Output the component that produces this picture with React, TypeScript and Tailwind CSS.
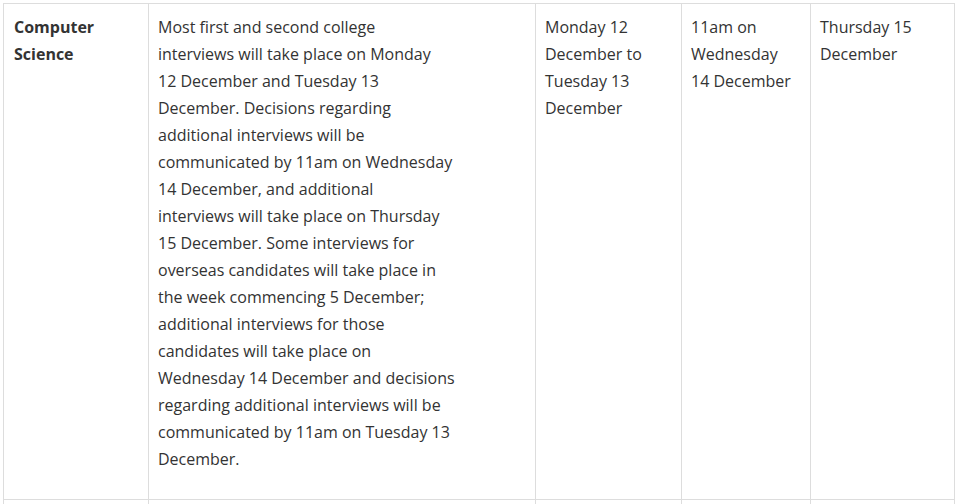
import React from 'react';

const rows = [
  {
    subject: ['Computer', 'Science'],
    details: [
      'Most first and second college',
      'interviews will take place on Monday',
      '12 December and Tuesday 13',
      'December. Decisions regarding',
      'additional interviews will be',
      'communicated by 11am on Wednesday',
      '14 December, and additional',
      'interviews will take place on Thursday',
      '15 December. Some interviews for',
      'overseas candidates will take place in',
      'the week commencing 5 December;',
      'additional interviews for those',
      'candidates will take place on',
      'Wednesday 14 December and decisions',
      'regarding additional interviews will be',
      'communicated by 11am on Tuesday 13',
      'December.',
    ],
    interviews: ['Monday 12', 'December to', 'Tuesday 13', 'December'],
    decisions: ['11am on', 'Wednesday', '14 December'],
    additional: ['Thursday 15', 'December'],
  },
];

const Lines = ({ lines }: { lines: string[] }) => (
  <>
    {lines.map((l, i) => (
      <span key={i} className="block whitespace-nowrap">
        {l}
      </span>
    ))}
  </>
);

const App = () => {
  return (
    <div className="h-[504px] overflow-hidden bg-white p-[3px] font-['Open_Sans',sans-serif] text-[16px] leading-[27px] text-[#333]">
      <table className="w-[951px] table-fixed border-collapse">
        <colgroup>
          <col className="w-[145px]" />
          <col className="w-[387px]" />
          <col className="w-[146px]" />
          <col className="w-[129px]" />
          <col className="w-[144px]" />
        </colgroup>
        <tbody>
          {rows.map((r, i) => (
            <tr key={i} className="align-top">
              <th className="border border-[#ddd] pl-[10px] pr-[10px] pt-[10px] pb-[26px] text-left font-bold">
                <Lines lines={r.subject} />
              </th>
              <td className="border border-[#ddd] pl-[9px] pr-[10px] pt-[10px] pb-[26px]">
                <Lines lines={r.details} />
              </td>
              <td className="border border-[#ddd] pl-[9px] pr-[10px] pt-[10px] pb-[26px]">
                <Lines lines={r.interviews} />
              </td>
              <td className="border border-[#ddd] pl-[9px] pr-[10px] pt-[10px] pb-[26px]">
                <Lines lines={r.decisions} />
              </td>
              <td className="border border-[#ddd] pl-[9px] pr-[10px] pt-[10px] pb-[26px]">
                <Lines lines={r.additional} />
              </td>
            </tr>
          ))}
          <tr className="h-[30px]">
            <td className="border border-[#ddd]" />
            <td className="border border-[#ddd]" />
            <td className="border border-[#ddd]" />
            <td className="border border-[#ddd]" />
            <td className="border border-[#ddd]" />
          </tr>
        </tbody>
      </table>
    </div>
  );
};

export default App;
